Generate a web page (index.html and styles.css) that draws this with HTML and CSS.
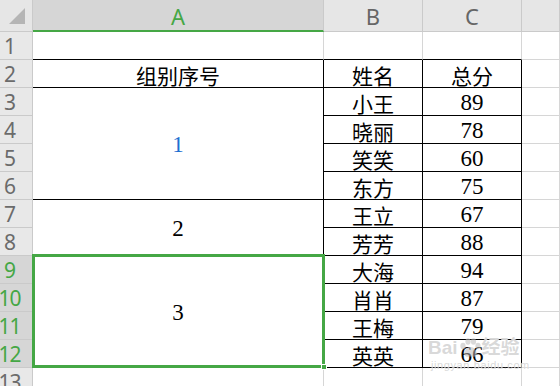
FILE: index.html
```html
<!DOCTYPE html>
<html lang="zh">
<head>
    <meta charset="UTF-8">
    <meta name="viewport" content="width=device-width, initial-scale=1.0">
    <title>成绩表</title>
    <link rel="stylesheet" href="styles.css">
</head>
<body>
    <div class="sheet">
        <div class="grid">
            <div class="corner"><span class="tri"></span></div>
            <div class="colhead sel">A</div>
            <div class="colhead">B</div>
            <div class="colhead">C</div>
            <div class="colhead"></div>

            <div class="rowhead">1</div>
            <div class="cell top"></div>
            <div class="cell top"></div>
            <div class="cell top"></div>
            <div class="cell"></div>

            <div class="rowhead">2</div>
            <div class="cell tb">组别序号</div>
            <div class="cell tb">姓名</div>
            <div class="cell tb">总分</div>
            <div class="cell"></div>

            <div class="rowhead">3</div>
            <div class="cell tb span4 num blue">1</div>
            <div class="cell tb">小王</div>
            <div class="cell tb num">89</div>
            <div class="cell"></div>

            <div class="rowhead">4</div>
            <div class="cell tb">晓丽</div>
            <div class="cell tb num">78</div>
            <div class="cell"></div>

            <div class="rowhead">5</div>
            <div class="cell tb">笑笑</div>
            <div class="cell tb num">60</div>
            <div class="cell"></div>

            <div class="rowhead">6</div>
            <div class="cell tb">东方</div>
            <div class="cell tb num">75</div>
            <div class="cell"></div>

            <div class="rowhead">7</div>
            <div class="cell tb span2 num">2</div>
            <div class="cell tb">王立</div>
            <div class="cell tb num">67</div>
            <div class="cell"></div>

            <div class="rowhead">8</div>
            <div class="cell tb">芳芳</div>
            <div class="cell tb num">88</div>
            <div class="cell"></div>

            <div class="rowhead sel">9</div>
            <div class="cell tb span4 num">3</div>
            <div class="cell tb">大海</div>
            <div class="cell tb num">94</div>
            <div class="cell"></div>

            <div class="rowhead sel">10</div>
            <div class="cell tb">肖肖</div>
            <div class="cell tb num">87</div>
            <div class="cell"></div>

            <div class="rowhead sel">11</div>
            <div class="cell tb">王梅</div>
            <div class="cell tb num">79</div>
            <div class="cell"></div>

            <div class="rowhead sel">12</div>
            <div class="cell tb">英英</div>
            <div class="cell tb num">66</div>
            <div class="cell"></div>

            <div class="rowhead">13</div>
            <div class="cell"></div>
            <div class="cell"></div>
            <div class="cell"></div>
            <div class="cell"></div>
        </div>

        <div class="selection"><span class="handle"></span></div>

        <div class="watermark">
            <div class="wm-logo">
                <span>Bai</span>
                <svg width="24" height="20" viewBox="0 0 24 20">
                    <ellipse cx="5" cy="8" rx="2.6" ry="3.2"/>
                    <ellipse cx="10" cy="3.5" rx="2.6" ry="3.2"/>
                    <ellipse cx="15.5" cy="3.5" rx="2.6" ry="3.2"/>
                    <ellipse cx="20" cy="8" rx="2.6" ry="3.2"/>
                    <path d="M12.5 9 C8 9 5.5 14 6.5 17 C7.5 19.5 10.5 18.5 12.5 18.5 C14.5 18.5 17.5 19.5 18.5 17 C19.5 14 17 9 12.5 9 Z"/>
                </svg>
                <span>经验</span>
            </div>
            <div class="wm-url">jingyan.baidu.com</div>
        </div>
    </div>
</body>
</html>
```

FILE: styles.css
```css
* {
    box-sizing: border-box;
}
body {
    margin: 0;
    background: #ffffff;
    overflow: hidden;
}
.sheet {
    position: relative;
    width: 560px;
    height: 386px;
    overflow: hidden;
}
.grid {
    display: grid;
    grid-template-columns: 33px 291px 99px 99px 1fr;
    grid-template-rows: 32px repeat(13, 28px);
    font-family: "Liberation Serif", "Noto Sans CJK SC", serif;
    font-size: 21px;
    color: #000;
}
.corner {
    background: #e6e6e6;
    border-right: 1px solid #cacaca;
    border-bottom: 1px solid #cacaca;
    position: relative;
}
.tri {
    position: absolute;
    left: 9px;
    top: 8px;
    width: 16px;
    height: 16px;
    background: #b5b5b5;
    clip-path: polygon(100% 0, 100% 100%, 0 100%);
}
.colhead {
    display: flex;
    align-items: center;
    justify-content: center;
    background: #e6e6e6;
    border-right: 1px solid #cacaca;
    border-bottom: 1px solid #cacaca;
    font-family: "Noto Sans", sans-serif;
    font-size: 22px;
    color: #666;
    padding-top: 1px;
}
.colhead.sel {
    background: #d6d6d6;
    border-bottom: 2px solid #45a745;
    color: #45a745;
}
.rowhead {
    display: flex;
    align-items: center;
    justify-content: center;
    padding-right: 13px;
    background: #e8e8e8;
    border-right: 1px solid #cacaca;
    border-bottom: 1px solid #cacaca;
    font-family: "Noto Sans", sans-serif;
    font-size: 21px;
    color: #6b6b6b;
    letter-spacing: -1px;
}
.rowhead.sel {
    background: #d6d6d6;
    color: #45a745;
}
.cell {
    display: flex;
    align-items: center;
    justify-content: center;
    padding-top: 3px;
    border-right: 1px solid #d6d6d6;
    border-bottom: 1px solid #d6d6d6;
}
.cell.num {
    font-size: 23px;
    padding-top: 2px;
}
.cell.top {
    border-bottom-color: #000;
}
.cell.tb {
    border-right-color: #000;
    border-bottom-color: #000;
}
.span4 {
    grid-row: span 4;
}
.span2 {
    grid-row: span 2;
}
.blue {
    color: #1f6fd1;
}
.selection {
    position: absolute;
    left: 32px;
    top: 254px;
    width: 293px;
    height: 114px;
    border: 3px solid #45a745;
}
.handle {
    position: absolute;
    right: -5px;
    bottom: -5px;
    width: 6px;
    height: 6px;
    background: #45a745;
    border: 1px solid #fff;
}
.watermark {
    position: absolute;
    left: 428px;
    top: 338px;
    color: rgba(185, 185, 185, 0.55);
    fill: rgba(185, 185, 185, 0.55);
    font-family: "Liberation Sans", "Noto Sans CJK SC", sans-serif;
    text-shadow: 0 0 1px #fff;
}
.wm-logo {
    display: flex;
    align-items: center;
    font-size: 19px;
    font-weight: bold;
    line-height: 20px;
}
.wm-url {
    font-size: 11px;
    letter-spacing: 0.6px;
    margin-top: 1px;
    padding-left: 3px;
}
```
